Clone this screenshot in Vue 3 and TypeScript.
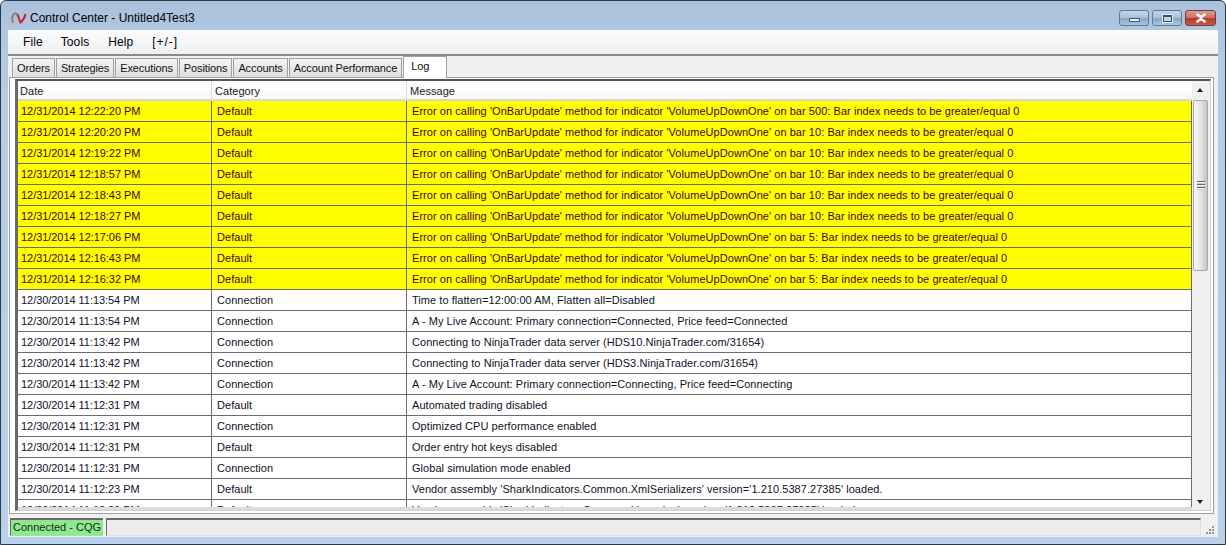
<script setup lang="ts">
interface LogRow {
  date: string;
  category: string;
  message: string;
  error?: boolean;
}

const menus = ['File', 'Tools', 'Help', '[+/-]'];
const tabs = ['Orders', 'Strategies', 'Executions', 'Positions', 'Accounts', 'Account Performance', 'Log'];

const errorRow = (time: string, bar: number): LogRow => ({
  date: `12/31/2014 ${time} PM`,
  category: 'Default',
  message: `Error on calling 'OnBarUpdate' method for indicator 'VolumeUpDownOne' on bar ${bar}: Bar index needs to be greater/equal 0`,
  error: true,
});

const infoRow = (time: string, category: string, message: string): LogRow => ({
  date: `12/30/2014 ${time} PM`,
  category,
  message,
});

const rows: LogRow[] = [
  errorRow('12:22:20', 500),
  errorRow('12:20:20', 10),
  errorRow('12:19:22', 10),
  errorRow('12:18:57', 10),
  errorRow('12:18:43', 10),
  errorRow('12:18:27', 10),
  errorRow('12:17:06', 5),
  errorRow('12:16:43', 5),
  errorRow('12:16:32', 5),
  infoRow('11:13:54', 'Connection', 'Time to flatten=12:00:00 AM, Flatten all=Disabled'),
  infoRow('11:13:54', 'Connection', 'A - My Live Account: Primary connection=Connected, Price feed=Connected'),
  infoRow('11:13:42', 'Connection', 'Connecting to NinjaTrader data server (HDS10.NinjaTrader.com/31654)'),
  infoRow('11:13:42', 'Connection', 'Connecting to NinjaTrader data server (HDS3.NinjaTrader.com/31654)'),
  infoRow('11:13:42', 'Connection', 'A - My Live Account: Primary connection=Connecting, Price feed=Connecting'),
  infoRow('11:12:31', 'Default', 'Automated trading disabled'),
  infoRow('11:12:31', 'Connection', 'Optimized CPU performance enabled'),
  infoRow('11:12:31', 'Default', 'Order entry hot keys disabled'),
  infoRow('11:12:31', 'Connection', 'Global simulation mode enabled'),
  infoRow('11:12:23', 'Default', "Vendor assembly 'SharkIndicators.Common.XmlSerializers' version='1.210.5387.27385' loaded."),
  infoRow('11:12:20', 'Default', "Vendor assembly 'SharkIndicators.Common.Licensing' version='1.210.5387.27385' loaded."),
];
</script>

<template>
  <div class="window">
    <!-- Barre de titre -->
    <div class="titlebar">
      <svg class="app-icon" width="16" height="12" viewBox="0 0 16 12">
        <path d="M2 11C.5 7 1.5 1.5 4.5 1.5 6 1.5 7 3 7.5 5" fill="none" stroke="#8a8080" stroke-width="2" />
        <path d="M6.5 2.5 9.5 10.5C11.5 9 13.5 6 14.5 2" fill="none" stroke="#c8222a" stroke-width="2" />
      </svg>
      <span class="title">Control Center - Untitled4Test3</span>
      <div class="controls">
        <div class="ctl">
          <span class="glyph-min"></span>
        </div>
        <div class="ctl">
          <span class="glyph-max"></span>
        </div>
        <div class="ctl ctl-close">
          <svg width="14" height="10" viewBox="0 0 14 10">
            <path d="M2.5 1 7 4 11.5 1 M2.5 9 7 6 11.5 9" fill="none" stroke="#fff" stroke-width="2.6" />
          </svg>
        </div>
      </div>
    </div>

    <div class="client">
      <nav class="menubar">
        <span v-for="m in menus" :key="m" class="menu-item">{{ m }}</span>
      </nav>

      <div class="tabstrip">
        <span v-for="t in tabs" :key="t" class="tab" :class="{ active: t === 'Log' }">{{ t }}</span>
      </div>

      <div class="panel">
        <div class="grid">
          <div class="grid-body">
            <div class="head">
              <div class="hcell c-date">Date</div>
              <div class="hcell c-cat">Category</div>
              <div class="hcell c-msg">Message</div>
            </div>
            <div class="rows">
              <div v-for="(r, i) in rows" :key="i" class="row" :class="{ error: r.error }">
                <div class="cell c-date">{{ r.date }}</div>
                <div class="cell c-cat">{{ r.category }}</div>
                <div class="cell c-msg">{{ r.message }}</div>
              </div>
            </div>
          </div>

          <div class="scrollbar">
            <div class="arrow up"></div>
            <div class="thumb"></div>
            <div class="track"></div>
            <div class="arrow down"></div>
          </div>
        </div>
      </div>

      <div class="statusbar">
        <div class="status-conn">Connected - CQG</div>
        <div class="status-fill"></div>
        <svg class="grip" width="12" height="12" viewBox="0 0 12 12" fill="#9a9a9a">
          <rect x="8" y="2" width="2" height="2" />
          <rect x="5" y="5" width="2" height="2" />
          <rect x="8" y="5" width="2" height="2" />
          <rect x="2" y="8" width="2" height="2" />
          <rect x="5" y="8" width="2" height="2" />
          <rect x="8" y="8" width="2" height="2" />
        </svg>
      </div>
    </div>
  </div>
</template>

<style>
html,
body {
  margin: 0;
  background: #fff;
  overflow: hidden;
}
</style>

<style scoped>
.window {
  width: 1226px;
  height: 545px;
  box-sizing: border-box;
  padding: 0 7px 7px;
  display: flex;
  flex-direction: column;
  background: linear-gradient(to bottom, #a9c2dc 0, #b4cbe3 60px, #b9d1ea 100%);
  border: 1px solid #2b3a46;
  border-radius: 6px 6px 0 0;
  font-family: "Liberation Sans", Arial, sans-serif;
  font-size: 11px;
  color: #000;
  overflow: hidden;
}

/* Barre de titre */
.titlebar {
  height: 29px;
  flex: none;
  box-sizing: border-box;
  display: flex;
  align-items: center;
  padding: 5px 2px 0 3px;
}

.app-icon {
  margin-right: 3px;
}

.title {
  font-size: 12px;
  color: #000;
}

.controls {
  margin-left: auto;
  display: flex;
  gap: 3px;
}

.ctl {
  width: 28px;
  height: 14px;
  border: 1px solid #5f7a96;
  border-radius: 3px;
  display: flex;
  align-items: center;
  justify-content: center;
  background: linear-gradient(to bottom, #c4d6e8 0, #a9c0d8 50%, #8ba6c2 52%, #a9c4de 100%);
}

.ctl-close {
  width: 29px;
  border-color: #7a3a35;
  background: linear-gradient(to bottom, #dc9a90 0, #cc6d60 50%, #b33a2c 52%, #c25a4c 100%);
}

.glyph-min {
  width: 9px;
  height: 2px;
  background: #e8eef4;
  border: 1px solid #4a5a6c;
  margin-top: 4px;
}

.glyph-max {
  width: 7px;
  height: 4px;
  border: 1px solid #3e4e60;
  border-width: 2px 1px 1px;
  background: #c7d6e6;
  outline: 1px solid #e8eef4;
}

.client {
  flex: 1;
  min-height: 0;
  display: flex;
  flex-direction: column;
  background: #f0f0f0;
}

.menubar {
  height: 24px;
  flex: none;
  display: flex;
  align-items: center;
  padding-left: 15px;
  gap: 18px;
  background: linear-gradient(to bottom, #fcfcfd, #eef0f3);
}

.menu-item {
  font-size: 12px;
  letter-spacing: 0.1px;
}

.menu-item:nth-child(3) {
  margin-left: 1px;
}

.menu-item:last-child {
  margin-left: 1px;
  letter-spacing: 0.9px;
}

.tabstrip {
  height: 23px;
  flex: none;
  box-sizing: border-box;
  display: flex;
  align-items: flex-end;
  padding-left: 4px;
  gap: 1px;
  border-top: 2px solid #8b8b8b;
  background: #f0f0f0;
}

.tab {
  height: 19px;
  box-sizing: border-box;
  line-height: 18px;
  padding: 0 4px;
  border: 1px solid #a0a0a0;
  border-bottom: none;
  background: linear-gradient(to bottom, #f4f4f4, #dedede);
  font-size: 11px;
  color: #111;
  letter-spacing: -0.12px;
}

.tab.active {
  height: 22px;
  margin-bottom: -1px;
  line-height: 19px;
  padding: 0 17px 0 7px;
  background: #fff;
  position: relative;
  z-index: 1;
}

.panel {
  flex: 1;
  min-height: 0;
  margin: 0 4px 0 1px;
  padding: 1px 2px 2px 5px;
  border: 1px solid #a0a0a0;
  background: #fff;
  display: flex;
}

.grid {
  flex: 1;
  min-width: 0;
  display: flex;
  border: 1px solid #d0d0d0;
  border-top: 2px solid #555;
  border-left: 3px solid #696969;
  background: #fff;
}

.grid-body {
  flex: 1;
  min-width: 0;
  display: flex;
  flex-direction: column;
  overflow: hidden;
  border-bottom: 3px solid #dcdcdc;
}

.head {
  height: 18px;
  flex: none;
  display: flex;
  background: linear-gradient(to bottom, #fff 0, #f7f8fa 100%);
  border-bottom: 2px solid #d6d6d6;
}

.hcell {
  box-sizing: border-box;
  line-height: 19px;
  padding-left: 3px;
  padding-top: 1px;
  border-right: 1px solid #dcdcdc;
  font-size: 11px;
  letter-spacing: 0.05px;
  color: #1b1b1b;
}

.hcell.c-date {
  padding-left: 2px;
}

.c-date {
  width: 194px;
  flex: none;
}

.c-cat {
  width: 195px;
  flex: none;
}

.c-msg {
  flex: 1;
  min-width: 0;
}

.hcell.c-msg {
  border-right: none;
}

.rows {
  flex: 1;
  min-height: 0;
  overflow: hidden;
}

.row {
  height: 21px;
  box-sizing: border-box;
  display: flex;
  border-bottom: 1px solid #6b6b6b;
  border-right: 1px solid #6b6b6b;
  background: #fff;
  color: #101028;
}

.row.error {
  background: #ffff00;
  color: #4a0000;
}

.cell {
  box-sizing: border-box;
  padding-left: 5px;
  line-height: 20px;
  border-right: 1px solid #6b6b6b;
  white-space: nowrap;
  overflow: hidden;
  font-size: 11px;
  letter-spacing: 0.05px;
}

.cell.c-date {
  padding-left: 3px;
  letter-spacing: -0.05px;
}

.cell.c-msg {
  border-right: none;
}

.scrollbar {
  width: 18px;
  flex: none;
  display: flex;
  flex-direction: column;
  background: #efefef;
}

.arrow {
  height: 19px;
  flex: none;
  position: relative;
}

.arrow::after {
  content: "";
  position: absolute;
  left: 5px;
  width: 0;
  height: 0;
  border-left: 3.5px solid transparent;
  border-right: 3.5px solid transparent;
}

.arrow.up::after {
  top: 7px;
  border-bottom: 4px solid #222;
}

.arrow.down::after {
  bottom: 6px;
  border-top: 4px solid #222;
}

.thumb {
  height: 171px;
  flex: none;
  margin: 0 2px 0 1px;
  box-sizing: border-box;
  border: 1px solid #a8a8a8;
  border-radius: 2px;
  background: linear-gradient(to right, #f6f6f6, #e4e4e4 50%, #c4c4c4);
  position: relative;
}

/* Stries de la poignée */
.thumb::after {
  content: "";
  position: absolute;
  left: 3px;
  right: 2px;
  top: 80px;
  height: 9px;
  background: repeating-linear-gradient(to bottom, #666 0 1px, #f4f4f4 1px 2px, #cfcfcf 2px 3px);
}

.track {
  flex: 1;
}

.statusbar {
  height: 23px;
  flex: none;
  box-sizing: border-box;
  display: flex;
  align-items: stretch;
  padding: 4px 0 1px 2px;
  gap: 3px;
  background: #f0f0f0;
}

.status-conn {
  box-sizing: border-box;
  width: 93px;
  padding-left: 2px;
  line-height: 15px;
  white-space: nowrap;
  overflow: hidden;
  background: #8fe88f;
  border-top: 2px solid #6a6a6a;
  border-left: 1px solid #6a6a6a;
  border-bottom: 1px solid #90ee90;
  font-size: 11px;
  color: #123012;
}

.status-fill {
  flex: 1;
  border-top: 2px solid #6a6a6a;
  border-left: 1px solid #6a6a6a;
  border-right: 1px solid #e0e0e0;
  border-bottom: 1px solid #e0e0e0;
  background: #efecec;
}

.grip {
  align-self: flex-end;
  margin: 0 2px 0 0;
}
</style>
